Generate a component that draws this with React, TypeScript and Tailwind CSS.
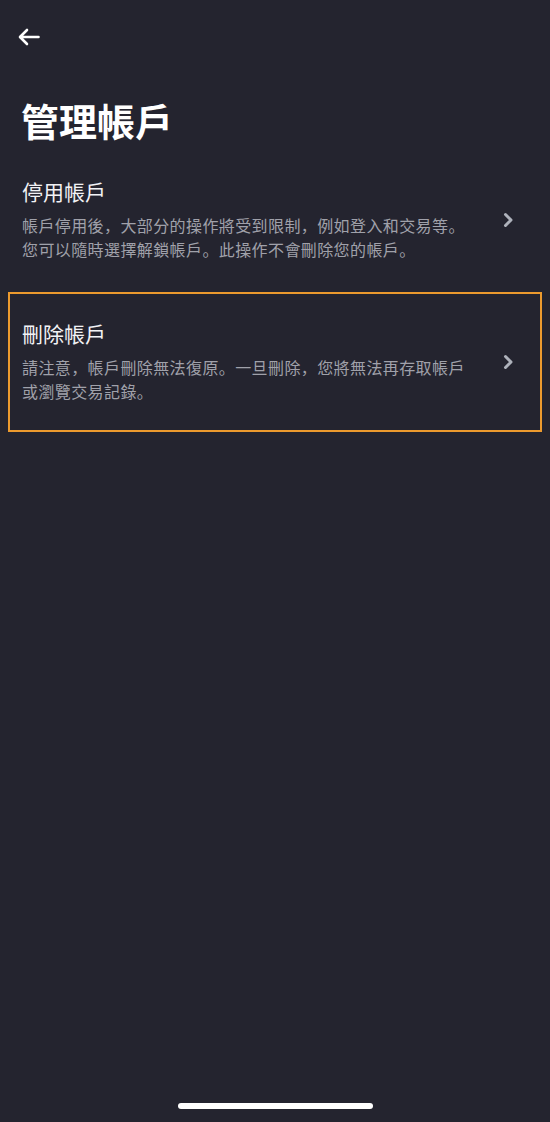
import React from "react";

const font = { fontFamily: '"Noto Sans CJK SC", "Noto Sans CJK TC", "Noto Sans", sans-serif' };

function Chevron() {
  return (
    <svg width="12" height="16" viewBox="0 0 12 16" className="shrink-0">
      <path d="M3.5 2.5 L9 8 L3.5 13.5" fill="none" stroke="#aeb2bb" strokeWidth="3" strokeLinecap="round" strokeLinejoin="round" />
    </svg>
  );
}

function Row({ title, desc, highlighted }: { title: string; desc: string; highlighted?: boolean }) {
  return (
    <div
      className={`flex items-center pl-[12px] pr-[26px] mx-[8px] ${
        highlighted ? "border-2 border-[#ec9a2e] h-[140px]" : "border-2 border-transparent h-[120px]"
      }`}
    >
      <div className="flex-1 min-w-0 pr-[20px]">
        <div className="text-[21px] leading-[30px] text-[#f2f2f5] mt-[-3px]">{title}</div>
        <div className="mt-[7px] text-[16px] leading-[24px] text-[#a0a1aa] tracking-[0.4px] max-w-[452px]">{desc}</div>
      </div>
      <Chevron />
    </div>
  );
}

export default function App() {
  return (
    <div className="relative w-[550px] h-[1122px] bg-[#24242f] overflow-hidden" style={font}>
      <div className="pt-[28px] pl-[17px] h-[90px]">
        <svg width="24" height="18" viewBox="0 0 24 18">
          <path d="M21.5 9 H3.5 M10 2 L3 9 L10 16" fill="none" stroke="#ffffff" strokeWidth="2.6" strokeLinecap="round" strokeLinejoin="round" />
        </svg>
      </div>
      <h1 className="pl-[21px] text-[38px] leading-[56px] font-bold text-white mt-[2px]">管理帳戶</h1>
      <div className="mt-[12px]">
        <Row
          title="停用帳戶"
          desc="帳戶停用後，大部分的操作將受到限制，例如登入和交易等。您可以隨時選擇解鎖帳戶。此操作不會刪除您的帳戶。"
        />
      </div>
      <div className="mt-[12px]">
        <Row
          highlighted
          title="刪除帳戶"
          desc="請注意，帳戶刪除無法復原。一旦刪除，您將無法再存取帳戶或瀏覽交易記錄。"
        />
      </div>
      <div className="absolute left-[178px] top-[1103px] w-[195px] h-[6px] rounded-full bg-white" />
    </div>
  );
}
